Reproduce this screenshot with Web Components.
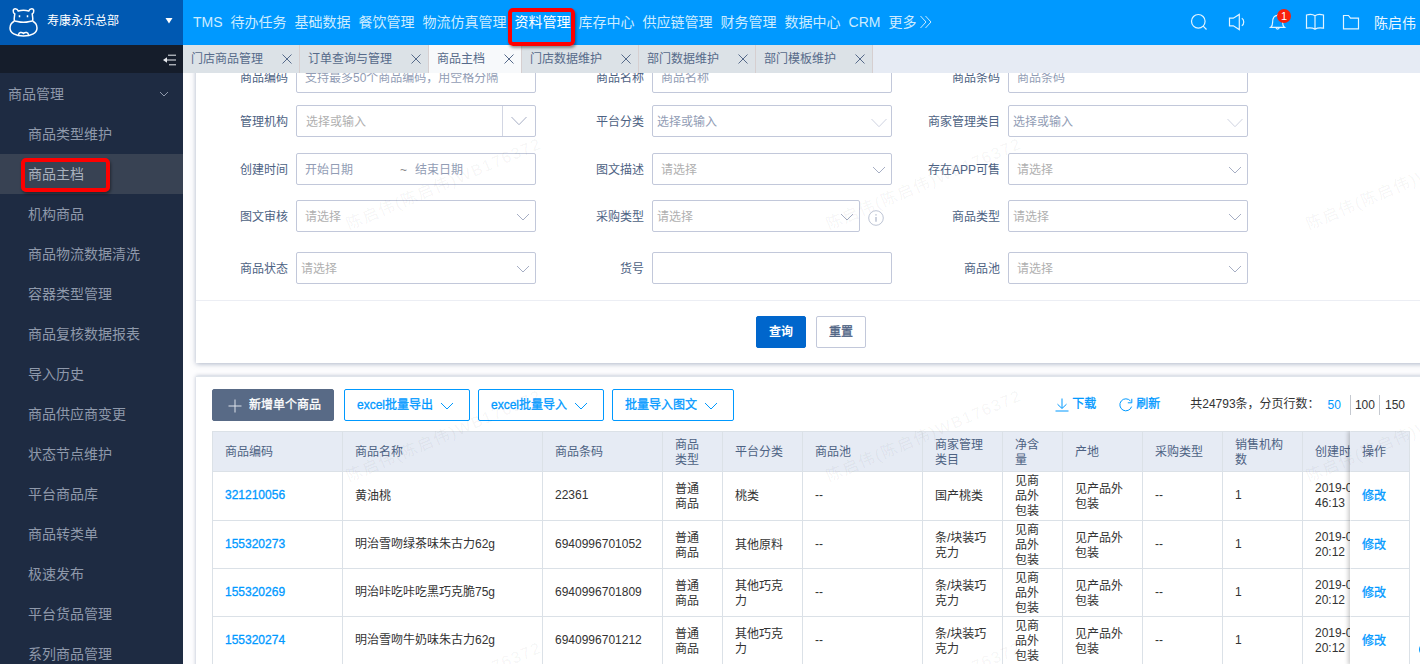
<!DOCTYPE html>
<html lang="zh-CN">
<head>
<meta charset="utf-8">
<title>商品主档</title>
<style>
html,body{margin:0;height:100%;overflow:hidden;background:#fff}
body{font:12px/15px "Liberation Sans","Noto Sans CJK SC",sans-serif;color:#333}
</style>
</head>
<body>
<goods-app></goods-app>
<script>
const define = (name, css, html) => customElements.define(name, class extends HTMLElement {
  connectedCallback() {
    if (this.shadowRoot) return;
    const root = this.attachShadow({ mode: 'open' });
    root.innerHTML = `<style>*{box-sizing:border-box}${css}</style>` + (typeof html === 'function' ? html(this) : html);
  }
});

const ICONS = {
  search: [18, 18, '<circle cx="8.3" cy="8.3" r="6.8"/><path d="M13.2 13.2l3.3 3.3"/>'],
  speaker: [18, 18, '<path d="M1.5 5.2h3.8l6-3.8v15.2l-6-3.8H1.5z"/><path d="M13.8 5.2c2.6 1.6 2.6 6 0 7.6"/>'],
  bell: [18, 18, '<path d="M1.6 14.4c1.6-1.2 2-2.6 2-5 0-4.4 1.6-7 5-7s5 2.6 5 7c0 2.4.4 3.8 2 5z"/><path d="M7 14.8c.2 1.7 3 1.7 3.2 0M8.6 2.4V1"/>'],
  book: [20, 18, '<path d="M10 2.7C8 1.2 4 1.2 1.5 2v13.2c3-.6 6-.6 8.500 1 2.500-1.600 5.500-1.600 8.500-1V2C16 1.200 12 1.200 10 2.700zM10 2.700v13.500"/>'],
  folder: [18, 18, '<path d="M1.500 15.800V2.500h5l2 2.600h8v10.700z"/>'],
  more: [14, 14, '<path d="M1.500 1l5.500 6-5.500 6M6.500 1L12 7l-5.500 6"/>'],
  close: [12, 12, '<path d="M1.500 1.500l9 9M10.500 1.500l-9 9"/>'],
  chevron: [14, 8, '<path d="M1 1l6 6 6-6"/>'],
  wide: [16, 10, '<path d="M.5 1L8 8.700 15.500 1"/>'],
  small: [10, 6, '<path d="M1 1l4 4 4-4"/>'],
  caret: [8, 6, '<path d="M.5 0h7L4 5.500z" fill="currentColor" stroke="none"/>'],
  fold: [14, 12, '<path d="M5 1.200h8M2 6h11M6 10.800h7"/><path d="M0 6l4-2.800v5.600z" fill="currentColor" stroke="none"/>'],
  info: [16, 16, '<circle cx="8" cy="8" r="7.300"/><path d="M8 7v4.800M8 4.200v1.300" stroke-width="1.500"/>'],
  plus: [14, 14, '<path d="M7 .5v13M.5 7h13"/>'],
  download: [14, 14, '<path d="M7 .5v9.500M2.500 6.200L7 10.500l4.500-4.300M.5 13h13"/>'],
  refresh: [14, 14, '<path d="M12.600 8.600A6 6 0 1 1 11.500 3M12.800.800v4H8.800"/>'],
  hippo: [30, 30, '<path d="M5.500 14C2.500 15.500 1 18 1 21c0 5 5.500 8 13.500 8S28 26 28 21c0-3-1.500-5.500-4.500-7"/><path d="M5.500 14c-.8-2.500 0-5 .3-7C3.500 5.500 3.800 1.800 6.200 1.800c1.600 0 2.600.9 3.100 2.200 3.200-.8 7.200-.8 10.400 0 .5-1.300 1.500-2.200 3.100-2.200 2.400 0 2.700 3.700.4 5.200.3 2 1.100 4.500.3 7"/><path d="M5.500 14c2.500 0 4 1.300 9 1.300s6.500-1.300 9-1.300M10.500 8.300v2M18.500 8.300v2"/><path d="M9.500 28c.3-2.800 3-3.300 5-1.600 2-1.700 4.700-1.200 5 1.600"/>']
};
define('ui-icon', ':host{display:inline-flex;flex:none}svg{display:block;fill:none;stroke:currentColor;stroke-width:var(--stroke,1)}', el => {
  const [w, h, body] = ICONS[el.getAttribute('name')];
  return `<svg width="${w}" height="${h}" viewBox="0 0 ${w} ${h}">${body}</svg>`;
});

/* Red annotation frame wrapped round its slotted label */
define('mark-frame', `:host{position:relative;display:inline-block}
i{position:absolute;inset:var(--inset);border:4px solid #fe0000;border-radius:5px;box-shadow:1px 2px 3px rgba(0,0,0,.4);z-index:5}`, '<slot></slot><i></i>');

define('org-switcher', `:host{display:flex;flex:none;align-items:center;height:45px;background:#0059b2;color:#fff;padding:0 10px 0 9px;--stroke:1.5}
span{flex:1;padding-left:8px;margin-top:-3px}ui-icon[name=hippo]{margin-top:-2px}ui-icon[name=caret]{margin-top:-4px}`,
  '<ui-icon name="hippo"></ui-icon><span><slot></slot></span><ui-icon name="caret"></ui-icon>');

define('side-item', `:host{display:flex;align-items:center;height:40px;padding:0 14px 0 28px;font-size:14px;color:#8f99ab}
:host([group]){padding-left:8px;justify-content:space-between}:host([active]){background:#384253;color:#a9b1be}`,
  el => `<slot></slot>${el.hasAttribute('group') ? '<ui-icon name="small"></ui-icon>' : ''}`);

define('side-menu', `:host{display:flex;flex-direction:column;width:183px;height:664px;overflow:hidden;background:#1e2b42}
.fold{height:28px;flex:none;background:#151d2b;color:#e8ebf0;display:flex;align-items:center;justify-content:flex-end;padding:1px 6px 0 0}
nav{padding-top:1px}mark-frame{--inset:-9px -26px -10px -7px}`, () => `<org-switcher>寿康永乐总部</org-switcher><div class="fold"><ui-icon name="fold"></ui-icon></div><nav>
<side-item group>商品管理</side-item>${['商品类型维护', '商品主档', '机构商品', '商品物流数据清洗', '容器类型管理', '商品复核数据报表', '导入历史', '商品供应商变更', '状态节点维护', '平台商品库', '商品转类单', '极速发布', '平台货品管理', '系列商品管理'].map(t =>
  t === '商品主档' ? `<side-item active><mark-frame>${t}</mark-frame></side-item>` : `<side-item>${t}</side-item>`).join('')}</nav>`);

define('top-bar', `:host{display:flex;align-items:center;height:45px;background:#09f;color:#cdecff;font-size:14px;line-height:20px;white-space:nowrap;padding-left:10px}
nav{display:flex;gap:8px;flex:none;margin-top:-1px}.cur{color:#fff}.more{display:flex;align-items:center;gap:3px}
mark-frame{--inset:-4px -4px -14px -7px}
.tools{display:flex;align-items:center;margin-left:auto;color:#e2f4ff;--stroke:1.2;margin-top:-1px}
.tools ui-icon{margin-right:19px}.bell{position:relative;display:flex}.bell ui-icon[name=bell]{margin-right:18px}.tools ui-icon[name=search]{margin-right:20px}.tools ui-icon[name=speaker]{margin-right:23px}.tools ui-icon[name=book]{margin-right:17px}.tools ui-icon[name=folder]{margin-right:14px}
b{position:absolute;left:8px;top:-4px;width:14px;height:14px;border-radius:7px;background:#f9200b;color:#fff;font:11px/14px "Liberation Sans",sans-serif;text-align:center}
.user{margin-right:4px;margin-top:2px;color:#e8f6ff}`, () => `<nav>${['TMS', '待办任务', '基础数据', '餐饮管理', '物流仿真管理', '资料管理', '库存中心', '供应链管理', '财务管理', '数据中心', 'CRM'].map(t =>
  t === '资料管理' ? `<mark-frame class="cur">${t}</mark-frame>` : `<span>${t}</span>`).join('')}<span class="more">更多<ui-icon name="more"></ui-icon></span></nav>
<div class="tools"><ui-icon name="search"></ui-icon><ui-icon name="speaker"></ui-icon><span class="bell"><ui-icon name="bell"></ui-icon><b>1</b></span><ui-icon name="book"></ui-icon><ui-icon name="folder"></ui-icon><span class="user">陈启伟</span></div>`);

define('page-tab', `:host{display:flex;align-items:center;height:28px;padding:0 6px 0 8px;gap:18px;border-right:1px solid #d6cfd0;background:#dce2e7;color:#566a8a}
:host([active]){background:#f7f9fb}`, '<slot></slot><ui-icon name="close"></ui-icon>');
define('tab-strip', ':host{display:flex;height:28px;background:#e6ebf4}', () =>
  ['门店商品管理', '订单查询与管理', '商品主档', '门店数据维护', '部门数据维护', '部门模板维护'].map(t => `<page-tab${t === '商品主档' ? ' active' : ''}>${t}</page-tab>`).join(''));

define('filter-field', `:host{display:flex;align-items:center;justify-content:flex-end;height:32px;color:#4d6283;white-space:nowrap}
label{margin-right:8px;padding-top:2px}
.box{display:flex;align-items:center;width:240px;height:32px;border:1px solid #c2c8da;border-radius:2px;background:#fff;padding:2px 5px 0 var(--pad,8px);color:#b0b0b0}
:host([kind=text]) .box,:host([kind=tree]) .box,:host([kind=range]) .box{color:#929db5}
ui-icon{color:#a6aec4;margin:-1px 0 0 auto}:host([kind=tree]) ui-icon[name=wide]{color:#ced2e0;margin-right:-1px;margin-top:2px}
:host([kind=combo]) .box{padding-right:0}.btn{margin:-2px 0 0 auto;width:33px;height:30px;border-left:1px solid #d2d6e3;display:flex;align-items:center;justify-content:center}.btn ui-icon{margin:0 1px 0 0}
:host([hint]) .box{width:208px}ui-icon[name=info]{color:#bdc4d4;margin:3px 8px 0 8px}
.tilde{margin:0 8px 0 47px;color:#888}`, el => {
  const kind = el.getAttribute('kind'), text = el.getAttribute('placeholder') || '';
  const inner = { text, tree: `${text}<ui-icon name="wide"></ui-icon>`, select: `${text}<ui-icon name="chevron"></ui-icon>`,
    combo: `${text}<span class="btn"><ui-icon name="wide"></ui-icon></span>`, range: '开始日期<span class="tilde">~</span>结束日期' }[kind];
  return `<label><slot></slot></label><div class="box">${inner}</div>${el.hasAttribute('hint') ? '<ui-icon name="info"></ui-icon>' : ''}`;
});

define('ui-button', `:host{display:inline-flex;align-items:center;justify-content:center;height:32px;border:1px solid #c2c8da;border-radius:2px;background:#fff;color:#4d6283;-webkit-text-stroke:.3px;white-space:nowrap;padding:1px 12px 0}
:host([kind=primary]){background:#06c;border-color:#06c;color:#fff;font-weight:700;-webkit-text-stroke:0}
:host([kind=dark]){background:#586a86;border-color:#586a86;color:#fff}
:host([kind=line]){border-color:#09f;color:#09f}ui-icon[name=plus]{margin:0 7px 0 3px;color:#dde2ea}ui-icon[name=chevron]{margin-left:7px;margin-right:3px}`,
  el => `${el.getAttribute('kind') === 'dark' ? '<ui-icon name="plus"></ui-icon>' : ''}<slot></slot>${el.getAttribute('kind') === 'line' ? '<ui-icon name="chevron"></ui-icon>' : ''}`);

define('filter-panel', `:host{display:flex;flex-direction:column;flex:none;margin-top:-12px;width:1240px;height:302px;background:#fff;box-shadow:0 1px 5px rgba(96,112,146,.5)}
.rows{height:240px;border-bottom:1px solid #eceef4;flex:none}
.row{display:grid;grid-template-columns:340px 356px 356px}
.row:nth-child(2){margin-top:12px}.row:nth-child(3){margin-top:16px}.row:nth-child(4){margin-top:15px}.row:nth-child(5){margin-top:20px}
.acts{display:flex;gap:10px;padding:15px 0 0 560px}.p4{--pad:4px}.p9{--pad:9px}`, () => `<div class="rows">
<div class="row"><filter-field kind="text" placeholder="支持最多50个商品编码，用空格分隔">商品编码</filter-field><filter-field kind="text" placeholder="商品名称">商品名称</filter-field><filter-field kind="text" placeholder="商品条码">商品条码</filter-field></div>
<div class="row"><filter-field class="p9" kind="combo" placeholder="选择或输入">管理机构</filter-field><filter-field class="p4" kind="tree" placeholder="选择或输入">平台分类</filter-field><filter-field class="p4" kind="tree" placeholder="选择或输入">商家管理类目</filter-field></div>
<div class="row"><filter-field kind="range">创建时间</filter-field><filter-field kind="select" placeholder="请选择">图文描述</filter-field><filter-field kind="select" placeholder="请选择">存在APP可售</filter-field></div>
<div class="row"><filter-field kind="select" placeholder="请选择">图文审核</filter-field><filter-field class="p4" kind="select" hint placeholder="请选择">采购类型</filter-field><filter-field class="p4" kind="select" placeholder="请选择">商品类型</filter-field></div>
<div class="row"><filter-field class="p4" kind="select" placeholder="请选择">商品状态</filter-field><filter-field kind="text">货号</filter-field><filter-field kind="select" placeholder="请选择">商品池</filter-field></div>
</div><div class="acts"><ui-button kind="primary">查询</ui-button><ui-button>重置</ui-button></div>`);

define('list-toolbar', `:host{display:flex;align-items:center;height:32px;white-space:nowrap}
ui-button{flex:none;margin-right:8px}ui-button[kind=dark]{margin-right:10px;width:122px}
a{display:flex;align-items:center;gap:3px;color:#09f;-webkit-text-stroke:.3px;margin-right:23px}a ui-icon{margin-top:1px}
.right{display:flex;align-items:center;margin-left:auto;margin-top:-1px}.total{margin:0 8px 0 7px}
.n{height:20px;line-height:20px;padding:0 4px;border-left:1px solid #c5c9d0;margin-top:1px}.n.cur{border:0;color:#09f;padding:0 9px 0 0}.n:last-child{padding:0 5px}`,
  `<ui-button kind="dark">新增单个商品</ui-button><ui-button kind="line">excel批量导出</ui-button><ui-button kind="line">excel批量导入</ui-button><ui-button kind="line">批量导入图文</ui-button>
<div class="right"><a><ui-icon name="download"></ui-icon>下载</a><a><ui-icon name="refresh"></ui-icon>刷新</a><span class="total">共24793条，分页行数：</span><span class="n cur">50</span><span class="n">100</span><span class="n">150</span></div>`);

const HEAD = ['商品编码', '商品名称', '商品条码', '商品<br>类型', '平台分类', '商品池', '商家管理<br>类目', '净含<br>量', '产地', '采购类型', '销售机构<br>数', '创建时'];
const ITEMS = [
  ['321210056', '黄油桃', '22361', '桃类', '国产桃类', '46:13'],
  ['155320273', '明治雪吻绿茶味朱古力62g', '6940996701052', '其他原料', '条/块装巧<br>克力', '20:12'],
  ['155320269', '明治咔吃咔吃黑巧克脆75g', '6940996701809', '其他巧克<br>力', '条/块装巧<br>克力', '20:12'],
  ['155320274', '明治雪吻牛奶味朱古力62g', '6940996701212', '其他巧克<br>力', '条/块装巧<br>克力', '20:12']];
define('goods-table', `:host{display:grid;grid-template-columns:1138px 60px;width:1198px}
.row{display:grid;grid-template-columns:130px 200px 120px 60px 80px 120px 80px 60px 80px 80px 80px 48px;height:48px}
.ops{position:relative;box-shadow:-2px 0 4px rgba(0,0,0,.2);clip-path:inset(0 0 0 -8px)}
.c{display:flex;align-items:center;border:solid #dbe1e7;border-width:0 0 1px 1px;padding-left:12px;overflow:hidden;white-space:nowrap;background:#fff}
.first{height:49px}.ops .c{height:48px;border-right-width:1px;border-left-color:transparent;padding-left:11px}.ops .first{height:49px}
.first .c,.c.first{padding-bottom:1px}
.han{padding-top:2px}
.head{height:41px!important}.head .c,.ops .head{background:#e6ebf4;color:#4d6283;border-top-width:1px}
.id{color:#09f;-webkit-text-stroke:.3px}`, () => {
  const han = t => /\d|--/.test(t) ? '' : 'han';
  const row = (cells, cls) => `<div class="row ${cls}">${cells.map((t, i) => `<div class="c ${han(t)}"><span class="${!i && cls !== 'head' ? 'id' : ''}">${t}</span></div>`).join('')}</div>`;
  return `<div>${row(HEAD, 'head')}${ITEMS.map((r, i) => row([r[0], r[1], r[2], '普通<br>商品', r[3], '--', r[4], '见商<br>品外<br>包装', '见产品外<br>包装', '--', '1', '2019-0<br>' + r[5]], i ? '' : 'first')).join('')}</div>
<div class="ops"><div class="c han head">操作</div>${ITEMS.map((r, i) => `<div class="c han ${i ? '' : 'first'}"><span class="id">修改</span></div>`).join('')}</div>`;
});

define('list-panel', ':host{display:flex;flex-direction:column;gap:10px;flex:none;width:1240px;height:300px;margin-top:13px;padding:12px 0 0 16px;border-top:1px solid #dfe4ea;background:#fff;box-shadow:0 0 4px rgba(96,112,146,.45)}list-toolbar{width:1198px}',
  '<list-toolbar></list-toolbar><goods-table></goods-table>');

define('water-mark', ':host{position:absolute;inset:0;pointer-events:none}svg{display:block}text{font:16px "Liberation Sans","Noto Sans CJK SC",sans-serif;fill:rgba(0,0,0,.05);stroke:rgba(0,0,0,.03);stroke-width:.5px}', () =>
  `<svg width="1237" height="591">${[[166, 157], [646, 157], [1126, 157], [166, 409], [646, 409], [1126, 409], [166, 661], [646, 661]].map(([x, y]) =>
    `<text textLength="209" transform="translate(${x} ${y}) rotate(-23)">陈启伟(陈启伟)WB176372</text>`).join('')}</svg>`);

define('page-body', `:host{position:relative;display:flex;flex-direction:column;height:591px;overflow:hidden;padding-left:13px;background:#fdfdfe}
.help{position:absolute;right:-12px;top:570px;width:13px;height:13px;border-radius:7px;background:#09f}`,
  '<filter-panel></filter-panel><list-panel></list-panel><water-mark></water-mark><i class="help"></i>');

define('goods-app', ':host{display:grid;grid-template-columns:183px 1237px;width:1420px;height:664px;overflow:hidden}main{min-width:0}',
  '<side-menu></side-menu><main><top-bar></top-bar><tab-strip></tab-strip><page-body></page-body></main>');
</script>
</body>
</html>
